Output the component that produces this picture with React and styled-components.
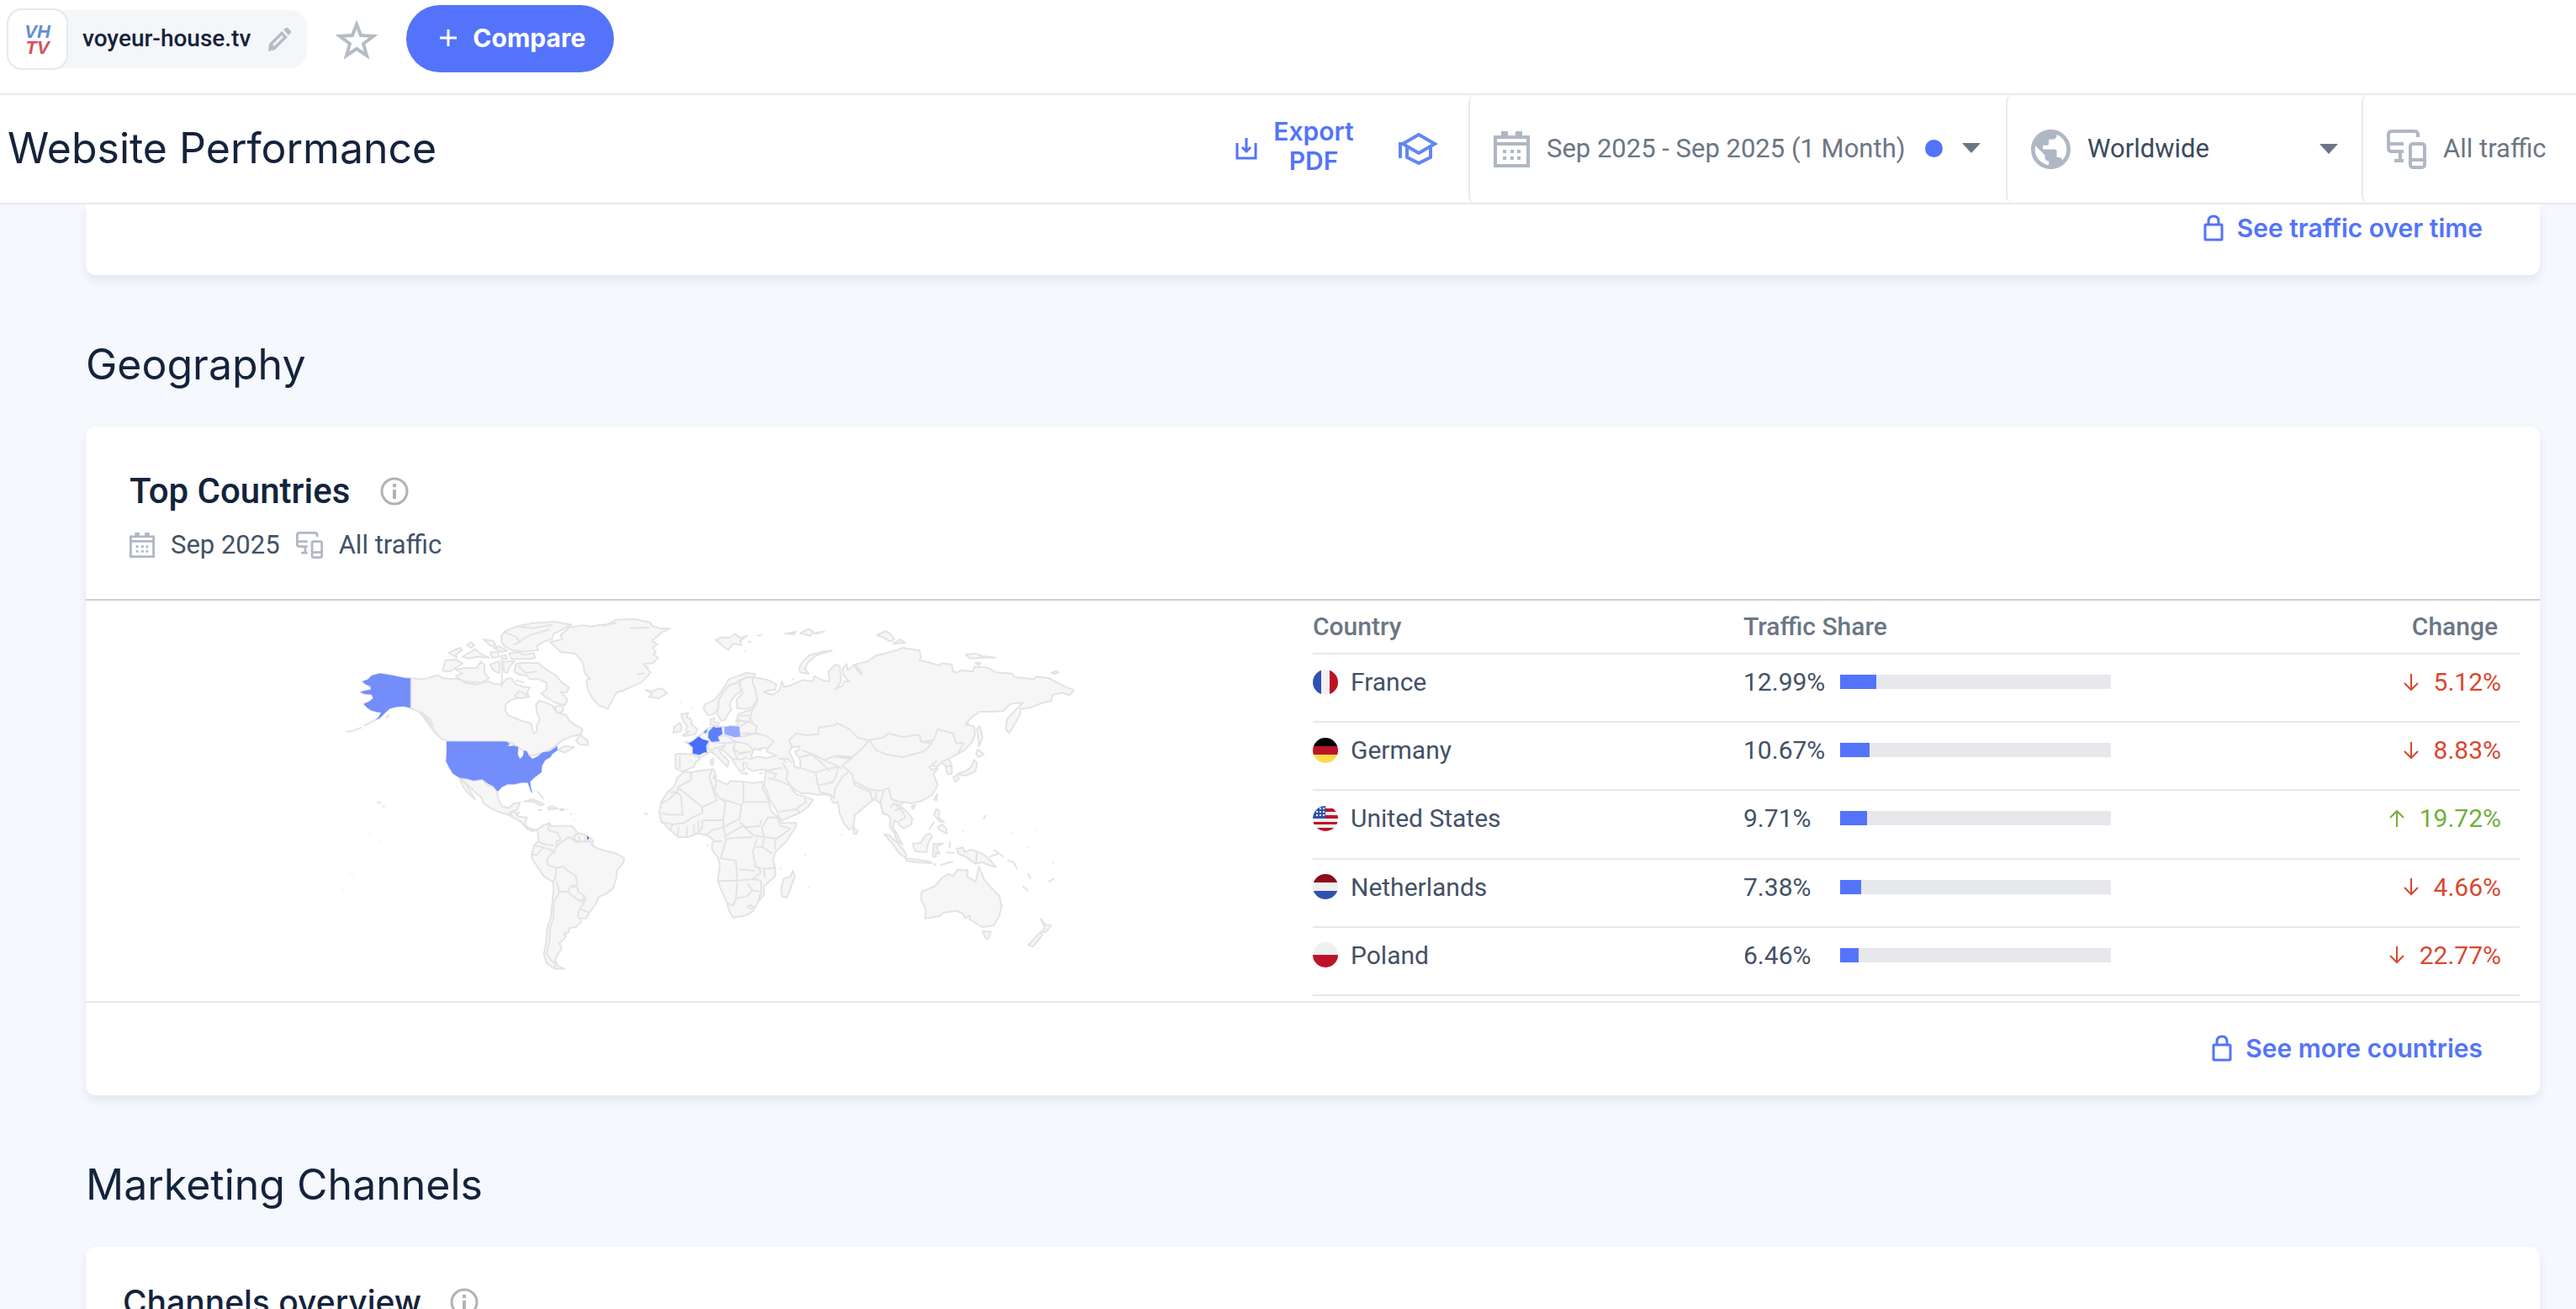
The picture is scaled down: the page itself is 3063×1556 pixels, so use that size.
import React from "react";
import styled, { createGlobalStyle } from "styled-components";

const GlobalStyle = createGlobalStyle`
  * {
    box-sizing: border-box;
  }

  body {
    margin: 0;
    background-color: #f5f8fd;
    color: #435166;
    font-family: Roboto, "Liberation Sans", sans-serif;
    font-size: 31px;
  }

  button, select {
    font: inherit;
    color: inherit;
    background: none;
    border: none;
    padding: 0;
    cursor: pointer;
  }
`;

const displayFont = `Inter, "Open Sans", sans-serif`;

const Page = styled.div`
  height: 100vh;
  overflow: hidden;
`;

const TopBar = styled.header`
  display: flex;
  align-items: flex-start;
  height: 113px;
  padding: 6px 8px;
  background-color: #fff;
  border-bottom: 2px solid #e8eaed;
`;

const SiteChip = styled.div`
  display: flex;
  align-items: center;
  height: 69px;
  margin-top: 6px;
  padding-right: 18px;
  background-color: #f5f6f9;
  border-radius: 20px;
`;

const SiteLogo = styled.div`
  display: flex;
  flex-direction: column;
  justify-content: center;
  align-items: center;
  width: 73px;
  height: 73px;
  background-color: #fff;
  border: 2px solid #e6e8eb;
  border-radius: 18px;
  font: italic bold 22px/19px "Liberation Sans", sans-serif;
`;

const LogoLine = styled.span`
  color: ${(props) => props.$color};
`;

const SiteName = styled.span`
  margin: 0 19px 0 17px;
  padding-bottom: 2px;
  font-size: 28px;
  font-weight: 500;
  color: #14233c;
`;

const IconButton = styled.button`
  display: flex;
  align-items: center;
`;

const StarButton = styled(IconButton)`
  margin: 16px 34px 0;
`;

const CompareButton = styled.button`
  display: flex;
  align-items: center;
  gap: 17px;
  height: 80px;
  padding: 0 34px 2px 38px;
  background-color: #5374fa;
  border-radius: 40px;
  color: #fff;
  font-family: ${displayFont};
  font-size: 30px;
  font-weight: 700;
`;

const TitleBar = styled.div`
  display: flex;
  height: 130px;
  background-color: #fff;
  border-bottom: 2px solid #e8eaed;
`;

const PageTitle = styled.h1`
  flex: 1;
  margin: 0;
  padding-left: 9px;
  font-family: ${displayFont};
  font-size: 50px;
  font-weight: 400;
  line-height: 126px;
  color: #14233c;
`;

const Actions = styled.div`
  display: flex;
  align-items: center;
  gap: 50px;
  padding-right: 35px;
`;

const ExportButton = styled.button`
  display: flex;
  align-items: center;
  gap: 16px;
  color: #5374fa;
  font-family: ${displayFont};
  font-size: 30px;
  font-weight: 600;
  line-height: 35px;
`;

const ExportLabel = styled.span`
  width: 102px;
  padding-bottom: 6px;
  text-align: center;
`;

const Filter = styled.div`
  display: flex;
  align-items: center;
  gap: 20px;
  min-width: ${(props) => props.$width};
  padding: 0 28px;
  border-left: 2px solid #e8eaed;
  border-radius: 8px 0 0 8px;
  color: #6b7684;
  white-space: nowrap;
`;

const DateButton = styled.button`
  display: flex;
  align-items: center;
  gap: 23px;
  padding-bottom: 2px;
`;

const Dot = styled.span`
  width: 21px;
  height: 21px;
  border-radius: 50%;
  background-color: #5374fa;
`;

const CountrySelect = styled.select`
  flex: 1;
  padding-bottom: 2px;
  appearance: none;
  color: #3a4a5f;
`;

const DeviceButton = styled.button`
  padding-bottom: 2px;
`;

const Content = styled.main`
  padding: 0 43px 0 102px;
`;

const Card = styled.section`
  background-color: #fff;
  border-radius: ${(props) => (props.$cut ? "0 0 12px 12px" : "12px")};
  box-shadow: 0 6px 12px rgba(14, 30, 90, 0.08);
`;

const CardFooter = styled.footer`
  display: flex;
  justify-content: flex-end;
  align-items: center;
  height: ${(props) => (props.$cut ? "84px" : "112px")};
  padding: 0 68px ${(props) => (props.$cut ? "28px" : "3px")} 0;
  border-top: ${(props) => (props.$cut ? "none" : "2px solid #e6e8eb")};
`;

const MoreLink = styled.a`
  display: flex;
  align-items: center;
  gap: 16px;
  color: #5374fa;
  font-family: ${displayFont};
  font-size: 30px;
  font-weight: 600;
  text-decoration: none;
`;

const SectionTitle = styled.h2`
  margin: 0;
  padding: 69px 0 37px;
  font-family: ${displayFont};
  font-size: 50px;
  font-weight: 400;
  line-height: 74px;
  color: #14233c;
`;

const CardHeader = styled.div`
  padding: 49px 52px 42px;
  border-bottom: 2px solid #ccced1;
`;

const CardTitle = styled.h3`
  display: flex;
  align-items: center;
  gap: 36px;
  margin: 0;
  font-size: 42px;
  font-weight: 500;
  line-height: 56px;
  color: #14233c;
`;

const OverviewHeader = styled.div`
  padding: 38px 44px;
`;

const OverviewTitle = styled(CardTitle)`
  gap: 34px;
  font-family: ${displayFont};
  font-size: 39px;
`;

const CardMeta = styled.div`
  display: flex;
  align-items: center;
  gap: 19px;
  margin-top: 14px;
  line-height: 44px;
`;

const CardBody = styled.div`
  display: grid;
  grid-template-columns: 1fr 1fr;
  height: 476px;
`;

const MapSvg = styled.svg`
  display: block;
  width: 100%;
  height: 476px;
`;

const CountryTable = styled.table`
  width: calc(100% - 24px);
  height: 470px;
  table-layout: fixed;
  border-collapse: collapse;
  font-size: 30px;
`;

const HeadCell = styled.th`
  width: ${(props) => props.$width};
  height: 63px;
  padding: 0 26px 2px 0;
  border-bottom: 2px solid #e6e8eb;
  font-weight: 500;
  color: #6b7684;
  text-align: ${(props) => props.$align || "left"};
`;

const Cell = styled.td`
  height: 81px;
  padding: 0 22px 14px 0;
  border-bottom: 2px solid #e6e8eb;
`;

const CellRow = styled.div`
  display: flex;
  align-items: center;
  gap: 15px;
`;

const ShareValue = styled.span`
  width: 100px;
`;

const Track = styled.div`
  width: 322px;
  height: 17px;
  background-color: #e7e8ec;
`;

const Fill = styled.div`
  height: 100%;
  background-color: #5374fa;
`;

const Change = styled(CellRow)`
  justify-content: flex-end;
  gap: 17px;
  color: ${(props) => (props.$up ? "#6fb03a" : "#d9482f")};
`;

const CalendarIcon = ({ size = 43 }) => (
  <svg width={size} height={size} viewBox="0 0 43 43" fill="#b0b7c4">
    <path d="M9 0h8v5h9V0h8v5h9v38H0V5h9zM4 9v4h35V9zM4 17v22h35V17z" fillRule="evenodd" />
    <path d="M11 22h4v4h-4zM20 22h4v4h-4zM28 22h4v4h-4zM11 30h4v4h-4zM20 30h4v4h-4zM28 30h4v4h-4z" />
  </svg>
);

const DevicesIcon = ({ size = 47 }) => (
  <svg width={size} height={size} viewBox="0 0 47 47" fill="none" stroke="#b0b7c4" strokeWidth="4">
    <path d="M37 9V6q0-4-4-4H6q-4 0-4 4v16q0 4 4 4h14M2 17h18M16 26v11M9 37h11" />
    <rect x="28" y="17" width="17" height="28" rx="3" />
    <path d="M28 36h17" />
  </svg>
);

const GlobeIcon = () => (
  <svg width="47" height="47" viewBox="2 2 20 20" fill="#b0b7c4">
    <path d="M12 2C6.48 2 2 6.48 2 12s4.48 10 10 10 10-4.48 10-10S17.520 2 12 2zm-1 17.930c-3.950-.49-7-3.850-7-7.930 0-.62.08-1.210.21-1.790L9 15v1c0 1.100.9 2 2 2v1.930zm6.900-2.540c-.26-.81-1-1.390-1.900-1.390h-1v-3c0-.55-.45-1-1-1H8v-2h2c.55 0 1-.45 1-1V7h2c1.100 0 2-.9 2-2v-.41c2.930 1.190 5 4.060 5 7.410 0 2.080-.8 3.970-2.100 5.390z" />
  </svg>
);

const PencilIcon = () => (
  <svg width="30" height="30" viewBox="0 0 30 30">
    <path d="M3 20L18 5l7 7-15 15-8 2zM7 21l2 2L20 12l-2-2z" fill="#b5bcc4" fillRule="evenodd" />
    <path d="M20 3l3-2h2l4 4v2l-3 3z" fill="#b5bcc4" />
  </svg>
);

const StarIcon = () => (
  <svg width="50" height="48" viewBox="0 0 50 48" fill="none" stroke="#b5bcc4" strokeWidth="4">
    <path d="M25 7l5 13 15 1-12 9 4 14-12-8-12 8 4-14-12-9 15-1z" />
  </svg>
);

const PlusIcon = () => (
  <svg width="24" height="24" viewBox="0 0 24 24" stroke="#fff" strokeWidth="3">
    <path d="M12 2v20M2 12h20" />
  </svg>
);

const ExportIcon = () => (
  <svg width="26" height="28" viewBox="0 0 26 28" fill="none" stroke="#5374fa" strokeWidth="3">
    <path d="M2 7v18h22V7M13 1v16M8 12l5 5 5-5" />
  </svg>
);

const CapIcon = () => (
  <svg width="48" height="38" viewBox="0 0 48 38" fill="none" stroke="#6286f2" strokeWidth="4">
    <path d="M24 2L5 13l19 11 19-11zM10 16v13l14 7 14-7V16M2 30V13h4" />
  </svg>
);

const CaretIcon = () => (
  <svg width="22" height="12" viewBox="0 0 22 12">
    <path d="M0 0h22L11 12z" fill="#6b7684" />
  </svg>
);

const LockIcon = () => (
  <svg width="24" height="32" viewBox="0 0 24 32" fill="none" stroke="#5374fa" strokeWidth="3">
    <rect x="2" y="12" width="20" height="18" rx="1" />
    <path d="M6 12V8q0-6 6-6t6 6v4" />
  </svg>
);

const InfoIcon = () => (
  <svg width="34" height="34" viewBox="0 0 34 34">
    <circle cx="17" cy="17" r="15" fill="none" stroke="#b2b2b2" strokeWidth="3" />
    <path d="M15 8h4v4h-4zM15 15h4v11h-4z" fill="#b2b2b2" />
  </svg>
);

const ArrowIcon = ({ up }) => (
  <svg width="20" height="22" viewBox="0 0 20 22" fill="none" stroke="currentColor" strokeWidth="2">
    <path d={up ? "M10 21V2M2 10l8-8 8 8" : "M10 1v19M2 12l8 8 8-8"} />
  </svg>
);

const flags = {
  fr: (
    <>
      <path fill="#f0f0f0" d="M0 0h30v30H0z" />
      <path fill="#2f52b0" d="M0 0h10v30H0z" />
      <path fill="#bd1328" d="M20 0h10v30H20z" />
    </>
  ),
  de: (
    <>
      <path fill="#000" d="M0 0h30v10H0z" />
      <path fill="#bd1328" d="M0 10h30v10H0z" />
      <path fill="#f8dc4b" d="M0 20h30v10H0z" />
    </>
  ),
  us: (
    <>
      <path fill="#f0f0f0" d="M0 0h30v30H0z" />
      <path fill="#bd1328" d="M15 3h15v4H15zM15 11h15v4H15zM0 19h30v3H0zM0 26h30v4H0z" />
      <path fill="#2f52b0" d="M0 0h15v15H0z" />
      <path fill="#f0f0f0" d="M4 6h2v2H4zM8 6h2v2H8zM12 6h2v2h-2zM4 10h2v2H4zM8 10h2v2H8zM12 10h2v2h-2zM8 2h2v2H8zM12 2h2v2h-2z" />
    </>
  ),
  nl: (
    <>
      <path fill="#f0f0f0" d="M0 0h30v30H0z" />
      <path fill="#8e0a1c" d="M0 0h30v10H0z" />
      <path fill="#2f52b0" d="M0 20h30v10H0z" />
    </>
  ),
  pl: (
    <>
      <path fill="#f0f0f0" d="M0 0h30v15H0z" />
      <path fill="#bd1328" d="M0 15h30v15H0z" />
    </>
  ),
};

const FlagSvg = styled.svg`
  border-radius: 50%;
`;

const Flag = ({ code }) => (
  <FlagSvg width="30" height="30" viewBox="0 0 30 30">
    {flags[code]}
  </FlagSvg>
);

const countries = [
  { code: "fr", name: "France", share: 12.99, change: "5.12%" },
  { code: "de", name: "Germany", share: 10.67, change: "8.83%" },
  { code: "us", name: "United States", share: 9.71, change: "19.72%", up: true },
  { code: "nl", name: "Netherlands", share: 7.38, change: "4.66%" },
  { code: "pl", name: "Poland", share: 6.46, change: "22.77%" },
];

// western hemisphere
const westLand = [
  // Canada
  "M265 258L300 262 320 260 340 254 362 248 380 258 400 260 440 262 460 275 500 282 510 275 545 270 560 278 590 280 605 262 625 258 640 280 665 288 690 292 680 310 688 325 660 328 625 335 605 350 602 375 615 392 640 402 665 412 695 420 700 445 705 455 715 448 714 430 725 405 715 380 712 355 722 338 745 345 770 355 785 380 800 385 820 390 830 410 850 425 878 440 870 460 840 465 810 478 780 500 765 510 735 525 700 535 680 532 665 518 650 505 615 485 400 483 375 475 350 450 330 425 310 395 290 375 265 366z",
  // Mexico and Central America
  "M440 615L465 618 490 625 520 620 540 640 560 645 573 662 578 690 590 715 615 722 632 705 655 703 645 728 620 735 612 745 585 738 550 722 525 705 518 685 495 665 475 645 455 628z",
  "M612 745L625 735 640 738 650 752 680 755 672 780 690 795 715 800 700 805 680 795 660 772 640 760z",
  "M440 618L455 650 470 668 495 690 482 668 465 640z",
  "M670 698L700 690 740 708 728 712 700 698zM755 720L770 715 790 724 758 727zM798 725h14v4h-14z",
  // South America
  "M715 800L735 785 760 775 766 785 800 785 840 785 860 810 895 820 915 838 912 855 930 865 965 875 1000 885 1027 900 1022 920 1000 945 998 975 985 1010 965 1025 935 1040 925 1065 905 1090 890 1115 870 1115 872 1130 855 1145 830 1150 828 1165 810 1170 820 1178 805 1195 795 1205 804 1220 795 1235 785 1250 780 1265 790 1285 815 1295 780 1295 750 1275 740 1245 748 1200 752 1150 765 1110 770 1060 775 1010 772 985 740 965 720 935 697 900 697 885 705 855 720 840 720 815z",
  // Greenland, Iceland
  "M762 130L805 120 800 105 830 78 880 70 910 75 940 68 955 72 1000 50 1060 47 1120 60 1125 72 1150 80 1190 82 1160 95 1150 105 1125 125 1145 138 1128 150 1140 165 1130 175 1148 185 1130 205 1095 208 1120 238 1100 262 1085 275 1050 290 1025 302 1000 308 985 335 968 368 935 355 910 325 895 295 892 265 905 260 885 240 882 210 870 190 850 170 800 165 785 150z",
  "M1103 300L1125 306 1150 295 1165 298 1180 312 1150 330 1115 325 1128 315z",
  // Arctic islands
  "M588 110L600 92 640 75 700 62 780 57 838 68 800 88 775 100 770 118 735 130 715 145 720 158 665 164 630 160 600 145 590 130z",
  "M615 170L650 166 665 174 705 170 708 185 690 190 625 190z",
  "M525 120L560 126 568 140 550 143zM465 140L480 130 492 140 480 150zM400 168L440 150 448 158 425 175 430 185zM450 182L495 155 520 175 545 185 500 182 475 188zM560 150L580 145 610 160 590 165zM550 165H578V182L555 185zM585 180L605 176 608 190 590 188z",
  "M380 232L388 195 425 192 450 205 405 235z",
  "M425 228L465 222 500 222 515 200 528 210 528 240 545 258 520 275 455 270 440 262 425 250 450 242z",
  "M548 210L580 198 582 215 580 240 560 230zM595 200L635 198 620 215 610 240 598 235z",
  "M635 235L640 208 670 203 720 205 745 225 785 250 805 275 830 292 820 310 800 308 825 335 815 355 780 345 745 325 730 312 750 300 750 275 720 262 690 262 680 250 650 245z",
  "M635 325L650 305 662 308 685 325 660 330zM780 360L800 355 810 365 805 380 785 380z",
  "M855 482L870 458 880 470 895 478 898 498 870 495zM790 515L815 500 848 505 815 524z",
];

const westLines =
  "M35 450L60 446 90 434M98 428L130 412 155 400M305 380L330 412 345 440 365 465M315 390L335 405 345 430M300 378L325 400M640 135L690 105 760 85M600 95L640 110 655 130 630 140M650 75L700 80 770 68M590 190V290M650 215L675 240 715 235M640 265L670 275M718 662L740 690M145 700L160 704M165 713L172 719M117 814h3M152 844h3M43 955h3M55 960h3M25 1010h3M1097 740L1112 745M431 644h3M718 728h14M838 740v6M848 765h3M175 400L190 390M820 725h4M940 70L1000 62M1045 80L1115 78M1095 210L1115 222M1072 245L1100 240M890 240L905 265M640 748L655 735M625 735V750M760 775L755 800 790 810 800 835 785 840 785 860 775 885M720 840L740 850 775 855M862 812L845 825 855 840 870 840 865 822M888 822L885 838M785 860L800 845 830 825 855 842 905 840 920 860M705 855L740 862 715 888 697 888M740 862L775 875 750 905 755 925 785 935 780 975 772 985M785 935L810 930 825 945 855 965 860 995 835 1000 825 1020 795 1020 785 985M835 1000L860 1005 862 1020 885 1035 875 1055 855 1045 825 1020M875 1055L890 1050 885 1035M890 1050L865 1085 862 1110 870 1115M868 1080L900 1095M795 1020L775 1060 775 1110 762 1150 760 1200 750 1240 765 1265 780 1275 780 1295";

// eastern hemisphere, drawn 1140 units to the right
const eastLand = [
  // British Isles
  "M90 388L115 382 110 398 125 405 128 425 148 440 140 458 100 466 95 462 118 450 105 445 112 430 100 415zM65 432L85 418 92 430 88 448 62 453z",
  "M70 530L85 527 130 530 158 545 140 560 135 575 110 585 95 592 70 580z",
  // Scandinavia
  "M170 360L178 350 210 335 230 310 250 280 260 262 290 252 320 240 355 243 345 255 325 255 300 265 285 275 260 285 240 310 225 335 220 370 205 388 185 390 172 372z",
  "M225 335L240 310 260 285 290 275 305 290 300 308 285 318 270 335 262 355 270 370 258 385 245 408 232 410 218 385 222 365z",
  "M300 268L325 255 345 255 345 275 355 300 362 335 345 362 320 368 290 365 288 335 310 310 300 290z",
  "M195 425V405L208 400 205 415 225 418 222 428z",
  // Eurasia
  "M345 255L400 265 430 280 425 300 395 303 385 308 415 318 440 302 450 270 455 290 478 285 500 275 525 265 560 270 565 252 600 268 620 270 615 235 640 210 655 215 658 240 660 270 640 298 665 285 672 270 690 270 670 250 665 225 680 208 685 230 705 212 715 225 730 245 735 240 710 210 755 198 785 178 825 168 860 158 880 150 940 160 945 185 940 195 965 200 1010 213 1020 205 1055 210 1060 235 1075 238 1090 230 1130 235 1135 218 1180 220 1215 238 1270 242 1280 255 1350 262 1355 252 1400 258 1460 290 1490 300 1475 320 1450 310 1415 318 1410 340 1375 348 1340 362 1300 368 1298 390 1260 455 1248 440 1252 405 1290 365 1310 345 1265 350 1240 375 1200 378 1155 378 1130 395 1105 420 1135 432 1138 460 1125 490 1100 515 1075 530 1045 545 1055 570 1055 600 1040 600 1032 570 1020 560 1000 575 985 570 1000 555 975 575 985 585 1005 580 990 600 1005 640 985 675 950 695 910 705 885 700 870 712 900 740 915 760 910 780 885 795 870 785 865 775 850 765 845 790 860 815 875 845 880 852 860 838 850 810 835 790 835 755 825 745 810 742 800 705 780 690 765 700 730 730 710 745 705 785 690 800 670 775 655 740 648 700 635 705 625 690 630 682 600 672 575 675 545 668 520 670 495 655 478 640 490 660 505 675 530 680 560 692 545 715 515 738 450 765 440 755 430 730 405 690 395 660 385 640 388 620 392 585 370 585 345 590 325 578 322 560 310 560 315 585 300 590 285 570 270 545 250 525 235 512 225 514 235 530 260 555 255 575 240 560 210 530 195 520 180 530 158 540 130 530 130 505 105 485 130 485 150 465 175 450 190 435 240 432 290 428 298 405 285 415 295 385 345 370 362 340 355 300 345 275z",
  // Africa
  "M100 592L125 595 160 588 205 583 212 600 205 615 235 630 255 638 265 625 310 628 345 632 378 628 385 640 380 650 400 690 410 730 440 760 448 775 500 775 498 790 465 840 425 880 418 905 425 935 425 965 385 1000 385 1030 365 1055 345 1090 320 1105 275 1112 262 1090 250 1050 235 1020 220 980 228 930 222 900 200 870 200 850 205 835 185 820 150 812 115 825 80 825 50 800 20 770 12 740 18 700 45 660 65 645 75 615z",
  "M488 945L495 965 468 1040 450 1038 446 1010 455 975 480 965z",
  // Arctic
  "M213 122L235 112 265 115 280 100 300 115 325 108 300 125 305 140 275 135 258 158 240 145zM460 100L500 93 490 102zM515 98L545 82 560 92 550 108zM560 98L600 92 575 100z",
  "M510 225L520 205 545 178 600 163 628 160 570 178 540 205 530 225 545 243 515 238z",
  "M788 105L820 90 835 100 850 120 835 128 815 115zM845 135L870 120 890 132zM1105 175L1140 170 1165 180 1210 185 1160 185 1120 188zM1140 203L1158 205 1150 212zM1410 240L1425 233 1437 238 1420 243z",
  // East and south-east Asia
  "M1145 440L1155 430 1165 470 1152 502 1150 470zM1148 512L1170 530 1150 540 1142 530zM1075 600L1105 590 1125 575 1135 550 1145 560 1140 590 1110 605 1090 605zM1060 610L1075 605 1080 618 1068 628zM992 690L1003 672 1000 695zM912 715L925 710 918 725zM705 790L720 805 712 815 705 812z",
  "M992 745L1000 725 1010 730 1008 755 1028 772 1010 768zM1005 790L1020 780 1035 795 1038 812 1015 802z",
  "M815 815L835 820 865 850 890 880 892 900 865 880 845 850zM890 900L930 905 975 912 985 918 930 915 895 910zM915 848L945 845 960 820 975 812 985 822 970 850 965 880 925 875zM988 895L990 850 1025 848 1000 860 1012 885 1000 880 998 895z",
  "M1072 868L1095 862 1100 878 1125 870 1165 885 1190 905 1212 932 1185 925 1165 915 1140 920 1105 895 1080 885z",
  // Oceania
  "M945 1045L948 1020 995 1000 1020 970 1045 957 1060 965 1075 942 1112 943 1110 965 1140 985 1152 930 1170 975 1190 1000 1225 1035 1233 1070 1225 1105 1205 1140 1165 1147 1135 1128 1118 1118 1120 1105 1102 1115 1095 1098 1070 1088 1025 1095 1010 1108 960 1115 962 1085z",
  "M1165 1160L1195 1163 1185 1188 1175 1185zM1372 1117L1390 1138 1410 1140 1390 1165 1375 1163 1388 1148zM1370 1165L1378 1175 1345 1215 1328 1210z",
  "M195 550L205 545 203 568 195 565zM305 597H325V600z",
];

const seas = "M340 535L350 510 375 515 370 508 400 508 395 520 430 535 395 543 360 538 342 545zM475 520L485 505 512 500 508 515 495 520 515 550 515 580 495 575 490 550z";

const eastLines =
  "M85 535V580M127 364v4M85 346h4M360 106h18M328 128h12M315 162h4M485 262h8M475 480L500 455 535 462 580 458 580 435 640 425 645 418 690 440 720 470 760 480 735 510 700 540 640 535 600 550 560 530 520 515M475 480L485 505M760 480L810 470 830 455 880 468 940 460 945 485 985 490 955 520 880 540 820 530 785 515 765 485M945 485L990 480 1005 440 1060 455 1070 490 1098 490 1075 530M1015 560L1045 545M735 510L700 540 665 570 700 600 705 625 760 655 800 660 830 650 840 690 870 700 885 700M635 690L640 650 665 610 690 590M705 625L710 640 765 665 770 690 785 685 785 665M570 595L575 630 585 665 630 675M570 595L610 582 650 575 645 600 630 630 580 640M515 540L555 530 590 560 620 590M520 580L570 595M600 550L620 560 665 580M640 540L700 545M450 560L470 590 465 620 480 640M450 578L395 588M400 615L440 625 475 640M395 590L430 600 420 615M330 548L340 545M435 545H470L485 560M450 545L465 560M440 735L500 725 515 738M500 725L535 700 530 685M810 742L800 700 815 655M835 720L850 705 880 735 890 755 865 770M850 730L880 720M870 712L855 705M1032 575L1055 570M302 430L330 412 360 430 355 455 305 455M302 468L355 455 395 465 420 485 400 505M222 468L250 462 285 485 330 495 345 515M245 492L285 485 275 510 300 525 340 520M200 487L250 490 235 512M190 485L185 510 205 518M205 510L240 500M345 370L335 400 345 415M298 392L340 392M298 410L335 415M270 545L300 550 325 540M275 510L290 545M290 530L320 525M125 595V622L80 645 75 665H50M75 665L45 690 20 705M75 665L90 680 95 745H38L20 738M80 650L165 718 215 695 200 640 190 610 200 585M212 600L215 635 208 660 225 685 240 690 305 712 312 700V630M312 700H400M165 718V740L130 755 100 775 60 780 15 770M225 685L248 700 240 765 165 765 165 790 150 810M305 712L298 760 240 790M240 765L240 790 250 825M240 825L310 785 300 770M310 785L350 820 385 825 430 830M300 775L325 790 370 785 375 765M385 825L378 790 400 755 430 755 445 785 480 795 425 835V870M360 830L345 880 355 925M250 830L345 825M385 830L380 860 415 885M385 860H355M350 930L385 938 425 935M205 840H235M250 830L240 870 230 900 285 910 290 980 220 982M290 980L345 975 375 950 355 925M295 940L350 945M385 938L388 970M290 985L285 1045 275 1068 255 1062M285 1045L325 1035 345 1015 370 1020M325 990L345 1015M345 975L375 980V1020L365 1050M325 1072L338 1067 346 1074 337 1082zM80 790L78 820M110 785V823M135 780L137 820M150 765L152 810M60 780L50 800M180 818L200 800 240 790M1143 878V920M1188 895L1220 885M1205 870L1240 895M1255 908L1275 915 1288 938M1328 955L1335 975M1308 1000L1328 1018M1400 985L1420 972M990 925L1000 920M1015 925L1060 912M1048 840V865M1035 880L1065 882M975 798L992 770M1105 430L1115 415M368 600L380 595M530 889h4M545 1003h4M660 818h4M443 938h4M182 855h4M1168 762L1177 746M1265 808h4M1357 806h4M1326 860h4M1415 917h4M1094 803h4M1175 610";

const highlighted = [
  { fill: "#738dfb", d: "M265 258L240 256 205 248 180 244 155 240 125 248 112 262 90 270 105 282 120 288 122 298 100 302 82 308 100 316 125 318 130 330 118 340 95 350 110 365 125 375 145 380 158 382 150 396 135 410 155 402 175 382 190 368 215 362 240 360 265 366z" },
  { fill: "#738dfb", d: "M392 483H605L620 492 612 500 632 498 650 503 648 530 655 545 665 535 668 515 680 518 688 535 700 545 720 535 735 522 760 518 780 505 788 498 790 515 770 530 765 540 745 552 735 570 732 595 705 615 692 628 694 645 700 668 694 665 682 632 660 632 635 638 610 638 590 648 578 662 570 660 560 645 540 635 520 620 490 625 465 618 440 615 415 600 400 575 390 555 392 520z" },
  { fill: "#3f45b0", d: "M893 820L903 828 895 838z" },
  { fill: "#4a6dfb", d: "M1245 483L1255 490 1266 485 1293 465 1305 475 1330 482 1320 500 1323 525 1312 524 1295 533 1270 528 1270 505z" },
  { fill: "#5f7ffb", d: "M1326 450L1345 430 1355 434 1375 432 1378 458 1362 468 1368 484 1338 487 1325 470z" },
  { fill: "#7b94fc", d: "M1308 450L1322 438 1324 446 1318 458z" },
  { fill: "#94a8fd", d: "M1383 432L1405 428 1438 430 1442 468 1420 470 1383 458z" },
];

const WorldMap = () => (
  <MapSvg viewBox="-894 -18 4377 1428" role="img" aria-label="Traffic by country">
    <g fill="#f6f6f6" stroke="#e3e3e3" strokeWidth="6" strokeLinejoin="round">
      {westLand.map((d) => (
        <path key={d} d={d} />
      ))}
      <path d={westLines} fill="none" />
      <g transform="translate(1140 0)">
        {eastLand.map((d) => (
          <path key={d} d={d} />
        ))}
        <path d={seas} fill="#fff" />
        <path d={eastLines} fill="none" />
      </g>
    </g>
    <g stroke="#e6ecfb" strokeWidth="2">
      {highlighted.map(({ d, fill }) => (
        <path key={d} d={d} fill={fill} />
      ))}
    </g>
  </MapSvg>
);

const App = () => {
  return (
    <Page>
      <GlobalStyle />
      <TopBar>
        <SiteChip>
          <SiteLogo>
            <LogoLine $color="#5f8fd0">VH</LogoLine>
            <LogoLine $color="#d4505f">TV</LogoLine>
          </SiteLogo>
          <SiteName>voyeur-house.tv</SiteName>
          <IconButton aria-label="Edit website">
            <PencilIcon />
          </IconButton>
        </SiteChip>
        <StarButton aria-label="Add to favorites">
          <StarIcon />
        </StarButton>
        <CompareButton>
          <PlusIcon />
          Compare
        </CompareButton>
      </TopBar>

      <TitleBar>
        <PageTitle>Website Performance</PageTitle>
        <Actions>
          <ExportButton>
            <ExportIcon />
            <ExportLabel>Export PDF</ExportLabel>
          </ExportButton>
          <IconButton aria-label="Learn more">
            <CapIcon />
          </IconButton>
        </Actions>
        <Filter $width="639px">
          <CalendarIcon />
          <DateButton>
            Sep 2025 - Sep 2025 (1 Month)
            <Dot />
            <CaretIcon />
          </DateButton>
        </Filter>
        <Filter $width="423px">
          <GlobeIcon />
          <CountrySelect aria-label="Country">
            <option>Worldwide</option>
          </CountrySelect>
          <CaretIcon />
        </Filter>
        <Filter $width="255px">
          <DevicesIcon />
          <DeviceButton>All traffic</DeviceButton>
        </Filter>
      </TitleBar>

      <Content>
        <Card $cut>
          <CardFooter $cut>
            <MoreLink href="#traffic">
              <LockIcon />
              See traffic over time
            </MoreLink>
          </CardFooter>
        </Card>

        <SectionTitle>Geography</SectionTitle>
        <Card>
          <CardHeader>
            <CardTitle>
              Top Countries
              <InfoIcon />
            </CardTitle>
            <CardMeta>
              <CalendarIcon size={30} />
              Sep 2025
              <DevicesIcon size={32} />
              All traffic
            </CardMeta>
          </CardHeader>
          <CardBody>
            <WorldMap />
            <CountryTable>
              <thead>
                <tr>
                  <HeadCell $width="512px">Country</HeadCell>
                  <HeadCell>Traffic Share</HeadCell>
                  <HeadCell $width="300px" $align="right">
                    Change
                  </HeadCell>
                </tr>
              </thead>
              <tbody>
                {countries.map((country) => (
                  <tr key={country.code}>
                    <Cell>
                      <CellRow>
                        <Flag code={country.code} />
                        {country.name}
                      </CellRow>
                    </Cell>
                    <Cell>
                      <CellRow>
                        <ShareValue>{country.share}%</ShareValue>
                        <Track>
                          <Fill style={{ width: `calc(${country.share}% + 1px)` }} />
                        </Track>
                      </CellRow>
                    </Cell>
                    <Cell>
                      <Change $up={country.up}>
                        <ArrowIcon up={country.up} />
                        {country.change}
                      </Change>
                    </Cell>
                  </tr>
                ))}
              </tbody>
            </CountryTable>
          </CardBody>
          <CardFooter>
            <MoreLink href="#countries">
              <LockIcon />
              See more countries
            </MoreLink>
          </CardFooter>
        </Card>

        <SectionTitle>Marketing Channels</SectionTitle>
        <Card>
          <OverviewHeader>
            <OverviewTitle>
              Channels overview
              <InfoIcon />
            </OverviewTitle>
          </OverviewHeader>
        </Card>
      </Content>
    </Page>
  );
};

export default App;
